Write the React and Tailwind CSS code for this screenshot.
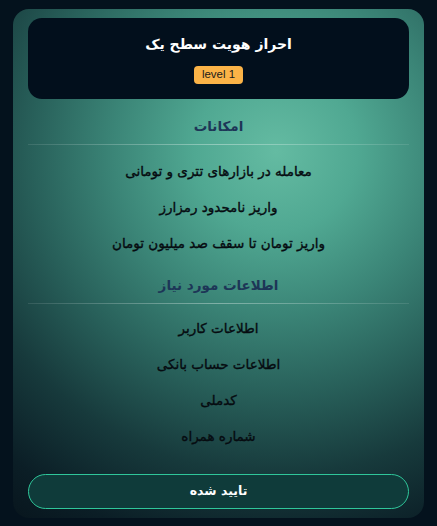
import React from 'react'

const features = [
  'معامله در بازارهای تتری و تومانی',
  'واریز نامحدود رمزارز',
  'واریز تومان تا سقف صد میلیون تومان',
]

const required = ['اطلاعات کاربر', 'اطلاعات حساب بانکی', 'کدملی', 'شماره همراه']

const Section = ({ title, items, first }) => (
  <>
    <div className={`h-[36px] flex items-center justify-center text-[13.5px] font-semibold text-[#1d3657] ${first ? 'mt-[9px]' : 'mt-[6px]'}`}>
      {title}
    </div>
    <div className="h-px bg-gradient-to-r from-white/10 via-white/35 to-white/10" />
    <div className={first ? 'pt-[8px]' : 'pt-[6px]'}>
      {items.map(it => (
        <div key={it} className="h-[36px] flex items-center justify-center text-[13.5px] text-[#060b10] [-webkit-text-stroke:0.35px_#060b10]">
          {it}
        </div>
      ))}
    </div>
  </>
)

export default function App() {
  return (
    <div dir="rtl" className="min-h-[526px] bg-[#04121d] pt-[9px] px-[13px] pb-[9px]" style={{ fontFamily: '"DejaVu Sans", "Noto Sans", sans-serif' }}>
      <div
        className="rounded-[16px] px-[15px] pt-[9px] pb-[9px]"
        style={{ background: 'radial-gradient(ellipse 110% 88% at 64% 28%, #64bba2 0%, #50a892 18%, #3b8577 36%, #28605a 54%, #173a3c 72%, #0b1e26 90%, #08161e 100%), #08161e' }}
      >
        <div className="h-[81px] rounded-[14px] bg-[#020f1c] flex flex-col items-center pt-[16px]">
          <h1 className="text-[14px] font-bold text-white leading-[20px]">احراز هویت سطح یک</h1>
          <span dir="ltr" className="mt-[12px] h-[18px] px-[8px] rounded-[4px] bg-[#fbb347] text-[#1a1a1a] text-[11.5px] flex items-center" style={{ fontFamily: '"Liberation Sans", Arial, sans-serif' }}>
            level 1
          </span>
        </div>

        <Section title="امکانات" items={features} first />
        <Section title="اطلاعات مورد نیاز" items={required} />

        <button className="mt-[20px] w-full h-[35px] rounded-full border border-[#2fc69a] bg-[#0f3b3a] text-white text-[12.5px] font-bold">
          تایید شده
        </button>
      </div>
    </div>
  )
}
